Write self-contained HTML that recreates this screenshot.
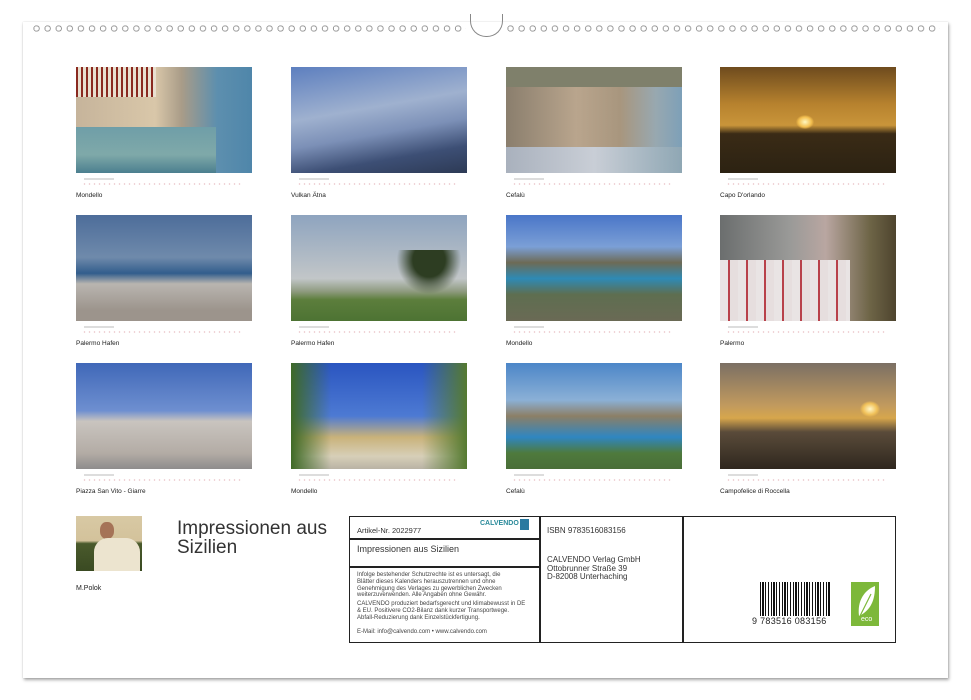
<!DOCTYPE html>
<html><head><meta charset="utf-8"><style>
body{margin:0;width:971px;height:700px;background:#fff;position:relative;overflow:hidden;font-family:"Liberation Sans",sans-serif;color:#222}
.page{position:absolute;left:23px;top:22px;width:925px;height:656px;background:#fff;box-shadow:1px 2px 3px rgba(0,0,0,.35),0 0 1px rgba(0,0,0,.2)}
.holes{position:absolute;top:25px;height:7px;background:radial-gradient(circle at 3.5px 3.5px,transparent 2.2px,#999 2.3px,#999 3.1px,transparent 3.3px) 0 0/11.1px 7px repeat-x}
.arc{position:absolute;left:470px;top:14px;width:31px;height:22px;border:1px solid #888;border-top:none;border-radius:0 0 16px 16px}
.ph{position:absolute;width:176px;height:106px}
.cal{position:absolute;width:160px;height:8px;background:radial-gradient(circle,#e6b8bf 0.6px,transparent 0.9px) 0 0/5px 4px repeat-x;opacity:.9}
.mon{position:absolute;width:30px;height:2px;background:#ddd}
.cap{position:absolute;font-size:6.5px;color:#222}
.box{position:absolute;left:349px;top:516px;width:545px;height:125px;border:1.5px solid #222}
.t{position:absolute;font-size:8px;color:#333}
.s{position:absolute;font-size:6px;color:#444;line-height:6.8px}
</style></head><body>
<div class="page"></div>
<div class="holes" style="left:33px;width:433px"></div>
<div class="holes" style="left:507px;width:433px"></div>
<div class="arc"></div>

<div class="ph" style="left:76px;top:67px;background:linear-gradient(90deg,#c6b49b 0,#d9c7a9 45%,#a99c88 60%,#5d8fae 80%,#4f86aa);"><div style="position:absolute;left:0;top:0;width:80px;height:30px;background:repeating-linear-gradient(90deg,#8a2a20 0 2px,#e9e0d0 2px 5px)"></div><div style="position:absolute;left:0;top:60px;width:140px;height:46px;background:linear-gradient(#6f9ea8,#7fa9a9 60%,#4b7f8f)"></div></div>
<div class="ph" style="left:291px;top:67px;background:linear-gradient(170deg,#5d7fbf 0,#9fb1cf 40%,#7c90b7 60%,#3d4f75 80%,#2d3a55)"></div>
<div class="ph" style="left:506px;top:67px;background:linear-gradient(90deg,#8a7e6d,#b9a58d 40%,#a8967e 65%,#98a8b0 85%,#7da0b8);"><div style="position:absolute;left:0;top:0;width:176px;height:20px;background:#7f806b"></div><div style="position:absolute;left:0;top:80px;width:176px;height:26px;background:linear-gradient(90deg,#a9b1bd,#c9ced6 50%,#8fa7b4)"></div></div>
<div class="ph" style="left:720px;top:67px;background:linear-gradient(#6e4b1e,#b7822e 35%,#c9953a 55%,#3a2b16 63%,#2c2212)"><div style="position:absolute;left:76px;top:48px;width:18px;height:14px;border-radius:50%;background:radial-gradient(#fff8c0,#f4c050 50%,transparent 72%)"></div></div>

<div class="ph" style="left:76px;top:215px;background:linear-gradient(#4d6d9a,#6f8aab 40%,#325d8c 55%,#b9b5b0 65%,#9c948c 90%)"></div>
<div class="ph" style="left:291px;top:215px;background:linear-gradient(#8ea4bf,#c2c6c8 60%,#8f9b80 72%,#5c7e3c 80%,#4d7333)"><div style="position:absolute;left:100px;top:35px;width:76px;height:50px;background:radial-gradient(ellipse at 50% 20%,#2d3d22 30%,transparent 60%)"></div></div>
<div class="ph" style="left:506px;top:215px;background:linear-gradient(#4a76c8,#7b9fd6 30%,#6d6a55 45%,#2e8ab5 60%,#5e6e50 75%,#6a6a55)"></div>
<div class="ph" style="left:720px;top:215px;background:linear-gradient(90deg,#6b6e6e,#9a9a98 40%,#b9a6a1 60%,#6e6547 85%,#4e442e)"><div style="position:absolute;left:0;top:45px;width:130px;height:61px;background:repeating-linear-gradient(90deg,#e9e4e4 0 8px,#b8414a 8px 10px,#e6dede 10px 18px)"></div></div>

<div class="ph" style="left:76px;top:363px;background:linear-gradient(#4068b8,#6e8fd0 45%,#c9c4bf 55%,#b3aca5 85%,#8e8c8c)"></div>
<div class="ph" style="left:291px;top:363px;background:linear-gradient(#2a55c0,#4d7ad3 50%,#c9b27a 70%,#d7cfb8 88%,#b9b3a5)"><div style="position:absolute;left:0;top:0;width:40px;height:106px;background:linear-gradient(90deg,#3f6a26,transparent)"></div><div style="position:absolute;right:0;top:0;width:45px;height:106px;background:linear-gradient(270deg,#557a30,transparent)"></div></div>
<div class="ph" style="left:506px;top:363px;background:linear-gradient(#4c86c8,#8bb0d6 35%,#8c7f66 50%,#2f86c1 70%,#4e7a3d 85%,#4a6e38)"></div>
<div class="ph" style="left:720px;top:363px;background:linear-gradient(#7b6f64,#c19a5e 40%,#d7a64c 52%,#5a4b3a 65%,#2f271e)"><div style="position:absolute;left:140px;top:38px;width:20px;height:16px;border-radius:50%;background:radial-gradient(#fff6c8,#f0c058 50%,transparent 72%)"></div></div>

<div class="mon" style="left:84px;top:178px"></div><div class="cal" style="left:82px;top:182px"></div><div class="cap" style="left:76px;top:192px">Mondello</div>
<div class="mon" style="left:299px;top:178px"></div><div class="cal" style="left:297px;top:182px"></div><div class="cap" style="left:291px;top:192px">Vulkan Ätna</div>
<div class="mon" style="left:514px;top:178px"></div><div class="cal" style="left:512px;top:182px"></div><div class="cap" style="left:506px;top:192px">Cefalù</div>
<div class="mon" style="left:728px;top:178px"></div><div class="cal" style="left:726px;top:182px"></div><div class="cap" style="left:720px;top:192px">Capo D'orlando</div>

<div class="mon" style="left:84px;top:326px"></div><div class="cal" style="left:82px;top:330px"></div><div class="cap" style="left:76px;top:340px">Palermo Hafen</div>
<div class="mon" style="left:299px;top:326px"></div><div class="cal" style="left:297px;top:330px"></div><div class="cap" style="left:291px;top:340px">Palermo Hafen</div>
<div class="mon" style="left:514px;top:326px"></div><div class="cal" style="left:512px;top:330px"></div><div class="cap" style="left:506px;top:340px">Mondello</div>
<div class="mon" style="left:728px;top:326px"></div><div class="cal" style="left:726px;top:330px"></div><div class="cap" style="left:720px;top:340px">Palermo</div>

<div class="mon" style="left:84px;top:474px"></div><div class="cal" style="left:82px;top:478px"></div><div class="cap" style="left:76px;top:488px">Piazza San Vito - Giarre</div>
<div class="mon" style="left:299px;top:474px"></div><div class="cal" style="left:297px;top:478px"></div><div class="cap" style="left:291px;top:488px">Mondello</div>
<div class="mon" style="left:514px;top:474px"></div><div class="cal" style="left:512px;top:478px"></div><div class="cap" style="left:506px;top:488px">Cefalù</div>
<div class="mon" style="left:728px;top:474px"></div><div class="cal" style="left:726px;top:478px"></div><div class="cap" style="left:720px;top:488px">Campofelice di Roccella</div>

<div style="position:absolute;left:76px;top:516px;width:66px;height:55px;background:linear-gradient(#d8c9a4,#d3c29b 45%,#4a5a2c 50%,#3a4a22)"><div style="position:absolute;left:24px;top:6px;width:14px;height:17px;border-radius:45%;background:#a57357"></div><div style="position:absolute;left:18px;top:22px;width:46px;height:33px;border-radius:14px 14px 0 0;background:#ece4cf"></div></div>
<div class="cap" style="left:76px;top:585px;font-size:7px">M.Polok</div>
<div style="position:absolute;left:177px;top:519px;font-size:19px;line-height:19px;color:#333">Impressionen aus<br>Sizilien</div>

<div class="box"></div>
<div style="position:absolute;left:539px;top:516px;width:1.5px;height:127px;background:#222"></div>
<div style="position:absolute;left:682px;top:516px;width:1.5px;height:127px;background:#222"></div>
<div style="position:absolute;left:349px;top:538px;width:190px;height:1.5px;background:#222"></div>
<div style="position:absolute;left:349px;top:566px;width:190px;height:1.5px;background:#222"></div>
<div class="t" style="left:357px;top:526px;font-size:7.5px">Artikel-Nr. 2022977</div>
<div style="position:absolute;left:480px;top:520px;font-size:7px;font-weight:bold;color:#2a8a9a">CALVENDO</div>
<div style="position:absolute;left:520px;top:519px;width:9px;height:11px;background:#2a7aa0"></div>
<div class="t" style="left:357px;top:544px;font-size:9px">Impressionen aus Sizilien</div>
<div class="s" style="left:357px;top:572px">Infolge bestehender Schutzrechte ist es untersagt, die<br>Blätter dieses Kalenders herauszutrennen und ohne<br>Genehmigung des Verlages zu gewerblichen Zwecken<br>weiterzuverwenden. Alle Angaben ohne Gewähr.</div>
<div class="s" style="left:357px;top:601px">CALVENDO produziert bedarfsgerecht und klimabewusst in DE<br>&amp; EU. Positivere CO2-Bilanz dank kurzer Transportwege.<br>Abfall-Reduzierung dank Einzelstückfertigung.</div>
<div class="s" style="left:357px;top:629px">E-Mail: info@calvendo.com • www.calvendo.com</div>
<div class="t" style="left:547px;top:526px">ISBN 9783516083156</div>
<div class="t" style="left:547px;top:556px;line-height:8.5px">CALVENDO Verlag GmbH<br>Ottobrunner Straße 39<br>D-82008 Unterhaching</div>
<div style="position:absolute;left:760px;top:582px;width:70px;height:36px;background:repeating-linear-gradient(90deg,#111 0 1px,#fff 1px 2px,#111 2px 4px,#fff 4px 5px,#111 5px 6px,#fff 6px 8px,#111 8px 9px,#fff 9px 11px)"></div>
<div style="position:absolute;left:752px;top:616px;width:80px;height:12px;background:#fff;font-size:9px;color:#222;letter-spacing:0.3px">9 783516 083156</div>
<div style="position:absolute;left:851px;top:582px;width:28px;height:44px;background:#7db83a;color:#fff;font-size:7px"><svg width="28" height="44" style="position:absolute;left:0;top:0"><path d="M8 34 C6 18 14 8 24 4 C24 18 20 28 8 34 Z" fill="#fff"/><path d="M7 38 L20 12" stroke="#7db83a" stroke-width="1.2"/></svg><span style="position:absolute;left:10px;top:34px">eco</span></div>
</body></html>
